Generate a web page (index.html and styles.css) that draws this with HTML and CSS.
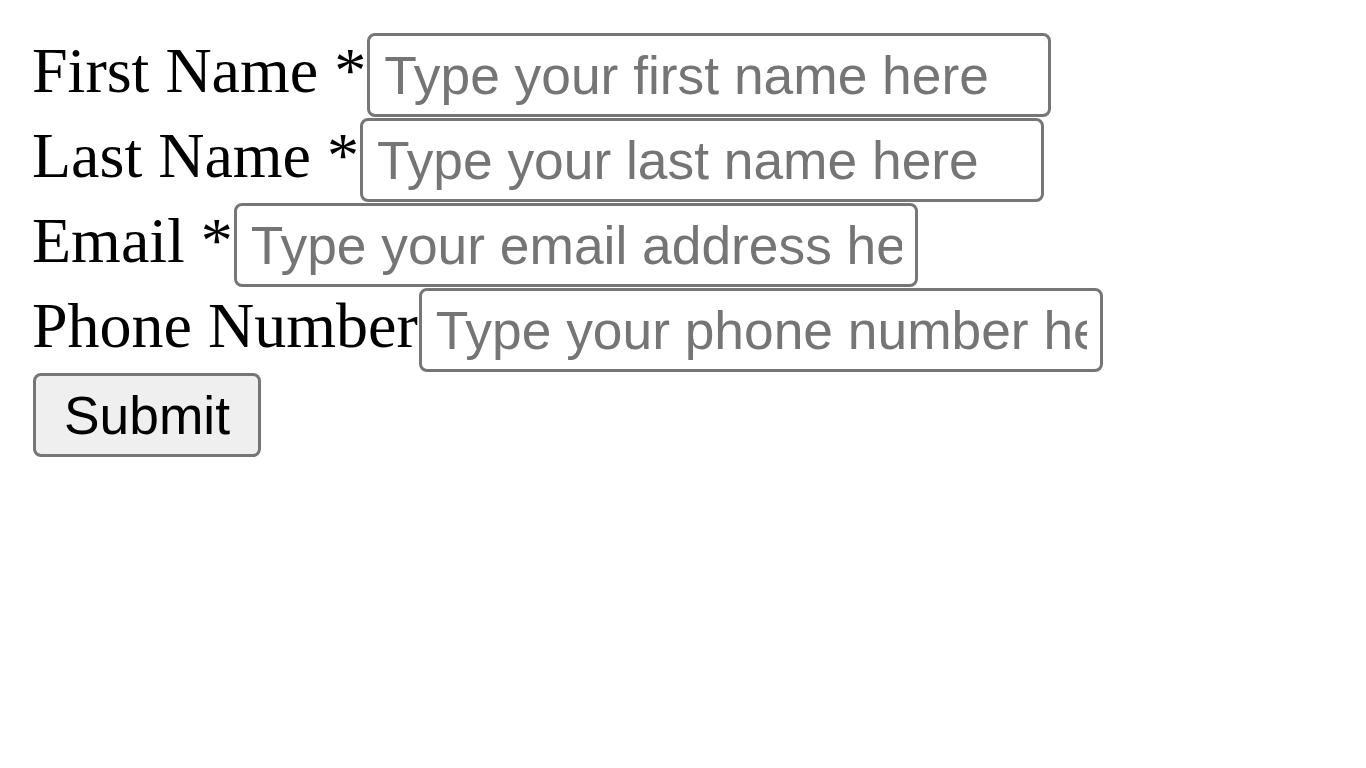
FILE: index.html
```html
<!DOCTYPE html>
<html>
<head>
<meta charset="utf-8">
<link rel="stylesheet" href="styles.css">
</head>
<body>
<form class="form">
  <div class="row"><label class="label" for="fn">First Name *</label><input class="field" id="fn" type="text" placeholder="Type your first name here"></div>
  <div class="row"><label class="label" for="ln">Last Name *</label><input class="field" id="ln" type="text" placeholder="Type your last name here"></div>
  <div class="row"><label class="label" for="em">Email *</label><input class="field" id="em" type="email" placeholder="Type your email address here"></div>
  <div class="row"><label class="label" for="ph">Phone Number</label><input class="field" id="ph" type="tel" placeholder="Type your phone number here"></div>
  <div class="row"><button class="submit" type="submit">Submit</button></div>
</form>
</body>
</html>
```
FILE: styles.css
```css
html, body {
  background: #fff;
}
body {
  margin: 32px;
  font-family: "Liberation Serif", "Times New Roman", serif;
  font-size: 64px;
  color: #000;
}
.form {
  display: flex;
  flex-direction: column;
}
.row {
  display: flex;
  align-items: flex-start;
  height: 85px;
}
.label {
  padding-top: 3px;
  line-height: 71px;
  margin-right: 1px;
  white-space: nowrap;
}
.field {
  box-sizing: border-box;
  flex: none;
  width: 684px;
  height: 84px;
  margin-top: 1px;
  border: 3px solid #767676;
  border-radius: 8px;
  padding: 0 13px 0 14px;
  font-family: "Liberation Sans", Arial, sans-serif;
  font-size: 53.33px;
  color: #000;
  background: #fff;
  outline: none;
}
.field::placeholder {
  color: #757575;
  opacity: 1;
}
.submit {
  box-sizing: border-box;
  height: 84px;
  margin-top: 1px;
  margin-left: 1px;
  padding: 0 28px;
  border: 3px solid #767676;
  border-radius: 8px;
  background: #efefef;
  font-family: "Liberation Sans", Arial, sans-serif;
  font-size: 53.33px;
  color: #000;
}
```
